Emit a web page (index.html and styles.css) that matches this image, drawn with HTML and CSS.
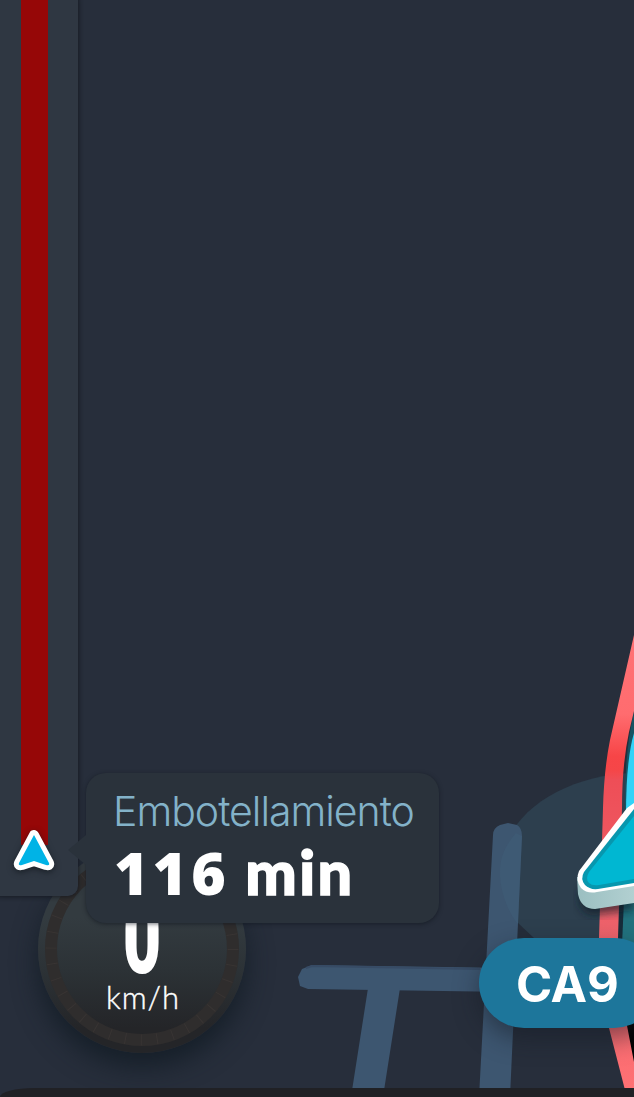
FILE: index.html
```
<!DOCTYPE html>
<html lang="es">
<head>
    <meta charset="UTF-8">
    <meta name="viewport" content="width=device-width, initial-scale=1.0">
    <title>Embotellamiento</title>
    <link rel="stylesheet" href="styles.css">
</head>
<body>

    <div id="map">
        <svg class="map-canvas" viewBox="0 0 634 1097">
            <defs>
                <linearGradient id="route" x1="0" y1="620" x2="0" y2="1090" gradientUnits="userSpaceOnUse">
                    <stop offset="0" stop-color="#ff7376"/>
                    <stop offset=".2" stop-color="#ff6c6f"/>
                    <stop offset=".29" stop-color="#f74547"/>
                    <stop offset=".32" stop-color="#f54648"/>
                    <stop offset=".34" stop-color="#ee4e57"/>
                    <stop offset=".65" stop-color="#ee626b"/>
                    <stop offset="1" stop-color="#ff7174"/>
                </linearGradient>
                <linearGradient id="side" x1="578" y1="0" x2="634" y2="0" gradientUnits="userSpaceOnUse">
                    <stop offset="0" stop-color="#9bbfc1"/>
                    <stop offset="1" stop-color="#b2d0d1"/>
                </linearGradient>
                <filter id="blur"><feGaussianBlur stdDeviation="4"/></filter>
            </defs>

            <!-- accuracy circle -->
            <path d="M634 773C562 775 501 815 500 872C500 892 508 912 519 926L536 940H634Z" fill="#2d3f4e"/>
            <path d="M517 922V940H536Z" fill="#252d3a"/>

            <!-- streets -->
            <g fill="#3d5670">
                <path d="M298 977L302 969L312 965L634 970V994L308 989L300 986Z"/>
                <path d="M368 988H400L383 1097H351Z"/>
                <path d="M493 835Q493 828 500 825L508 823L517 825Q522 828 522 836L510 1097H479Z"/>
            </g>
            <path d="M306 968L312 966L480 969" fill="none" stroke="#374b65" stroke-width="2"/>
            <path d="M516 833C505 846 500 858 500 872C500 892 508 912 518 924L522 836Z" fill="#41617a" opacity=".4"/>

            <!-- route -->
            <path d="M634 712Q625 750 625 800L622 950L634 1050Z" fill="#155363"/>
            <path d="M634 733Q626 760 626 815H634Z" fill="#32d3f8"/>
            <path d="M622 900H634V950H622Z" fill="#22727e"/>
            <path d="M619 900H624L622 945H617Z" fill="#172c3a"/>
            <path d="M624 1020L634 1065V1020Z" fill="#000"/>
            <path d="M634 635L610 740Q604 770 603 808L599 938Q600 985 609 1028L625 1090H634V1062L624 1010L618 938L622 808Q622 765 629 732L634 711Z" fill="url(#route)"/>

            <!-- own position -->
            <path d="M580 890Q576 914 594 915L634 910V870Z" fill="#111d28" opacity=".65" filter="url(#blur)"/>
            <path d="M577 877L578 894Q581 909 595 909L634 903V875Z" fill="url(#side)"/>
            <path d="M634 803L627 808L579 871Q575 880 581 888Q587 894 597 892L634 886Z" fill="#fff"/>
            <path d="M634 809L584 872Q580 879 585 885Q590 890 598 889L634 883Z" fill="#0797ae"/>
            <path d="M634 816L589 872Q585 879 589 883Q592 886 599 885L634 879Z" fill="#00b7d2"/>
        </svg>

        <div class="road-sign">CA9</div>

        <div class="speedometer">
            <svg class="dial" viewBox="0 0 208 208">
                <circle cx="104" cy="104" r="91" fill="none" stroke="#2f2d2d" stroke-width="12"/>
                <circle cx="104" cy="104" r="91" fill="none" stroke="#383433" stroke-width="11" stroke-dasharray="1 14.88"/>
            </svg>
            <div class="speed">0</div>
            <div class="unit">km/h</div>
        </div>

        <div class="traffic-bar">
            <div class="jam"></div>
            <svg class="bar-arrow" viewBox="0 0 46 48">
                <path d="M23 7L8 35Q7 38 11 37L23 33L35 37Q39 38 38 35Z" fill="#00b3e6" stroke="#fff" stroke-width="10" stroke-linejoin="round"/>
                <path d="M23 7L8 35Q7 38 11 37L23 33L35 37Q39 38 38 35Z" fill="#00b3e6"/>
            </svg>
        </div>

        <div class="tooltip">
            <div class="tooltip-title">Embotellamiento</div>
            <div class="tooltip-time"><span class="minutes">116</span> <span class="minutes-unit">min</span></div>
        </div>

        <div class="bottom-bar"></div>
    </div>

</body>
</html>
```

FILE: styles.css
```
body {
    margin: 0;
    font-family: Lato, "Liberation Sans", sans-serif;
    background-color: #272e3b;
}
#map {
    position: relative;
    width: 634px;
    height: 1097px;
    overflow: hidden;
    background-color: #272e3b;
}
.map-canvas {
    display: block;
    width: 634px;
    height: 1097px;
}
.road-sign {
    position: absolute;
    left: 479px;
    top: 938px;
    width: 180px;
    height: 90px;
    box-sizing: border-box;
    padding-left: 37px;
    border-radius: 45px;
    background: #1d769b;
    box-shadow: 0 10px 24px rgba(20, 26, 36, 0.5);
    color: white;
    font: 700 49px/93px Inter, sans-serif;
    letter-spacing: -0.3px;
}
.speedometer {
    position: absolute;
    left: 38px;
    top: 845px;
    width: 208px;
    height: 208px;
    border-radius: 50%;
    background: linear-gradient(#333b40 35%, #2c3236 60%, #242528 88%);
    box-shadow: 0 14px 26px rgba(18, 27, 36, 0.8);
    color: white;
    text-align: center;
}
.dial {
    position: absolute;
    left: 0;
    top: 0;
    width: 208px;
    height: 208px;
}
.speed {
    position: relative;
    padding-top: 55px;
    font: 900 104px/75px Roboto, sans-serif;
    transform: scaleX(0.64);
}
.unit {
    position: relative;
    margin-top: 4px;
    font-size: 31px;
    line-height: 36px;
    font-weight: 300;
    letter-spacing: 1px;
    text-indent: 2px;
    -webkit-text-stroke: 0.4px white;
}
.traffic-bar {
    position: absolute;
    left: -10px;
    top: -10px;
    width: 88px;
    height: 906px;
    border-radius: 10px;
    background: #2f3742;
    box-shadow: 1px 1px 4px rgba(15, 19, 26, 0.7);
}
.jam {
    width: 27px;
    height: 855px;
    margin-left: 31px;
    background: #960707;
}
.bar-arrow {
    position: absolute;
    left: 21px;
    top: 838px;
    width: 46px;
    height: 48px;
    overflow: visible;
    filter: drop-shadow(0 2px 3px rgba(10, 15, 20, 0.6));
}
.tooltip {
    position: absolute;
    left: 86px;
    top: 773px;
    width: 353px;
    height: 150px;
    box-sizing: border-box;
    padding: 14px 28px;
    border-radius: 20px;
    background: #2a323b;
    box-shadow: 0 1px 4px rgba(15, 20, 28, 0.6);
    white-space: nowrap;
}
.tooltip::before {
    content: "";
    position: absolute;
    left: -18px;
    top: 62px;
    border: 15px solid transparent;
    border-left: 0;
    border-right: 18px solid #2a323b;
}
.tooltip-title {
    margin-left: -1px;
    color: #83b2c9;
    font: 300 41px/48px Inter, sans-serif;
    letter-spacing: -1px;
}
.tooltip-time {
    margin-top: 6px;
    color: white;
    font-size: 61px;
    line-height: 62px;
    font-weight: 900;
    letter-spacing: 1px;
}
.minutes {
    font: 800 59px/1 "Open Sans", sans-serif;
    letter-spacing: 4px;
}
.minutes-unit {
    letter-spacing: 2.5px;
    -webkit-text-stroke: 1.5px white;
}
.bottom-bar {
    position: absolute;
    left: 0;
    right: 0;
    bottom: 0;
    height: 9px;
    border-radius: 34px 0 0 0 / 9px 0 0 0;
    background: #202125;
}
```
